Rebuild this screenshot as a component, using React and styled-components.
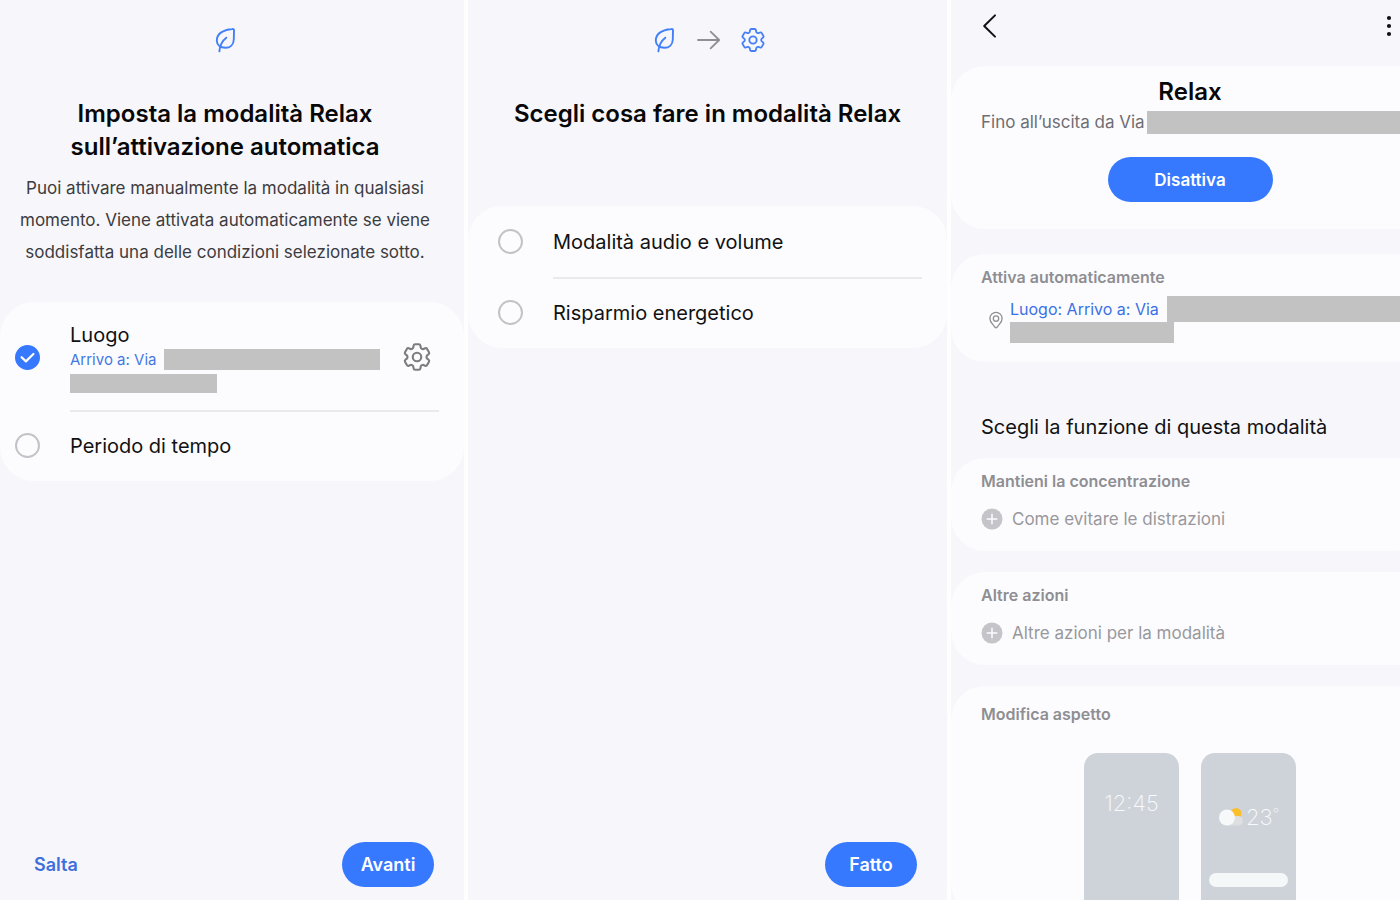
import React from "react";
import styled, { createGlobalStyle } from "styled-components";
import { HiOutlineCog6Tooth } from "react-icons/hi2";

function Leaf() {
  return (
    <svg width="26" height="26" viewBox="0 0 26 26" fill="none" stroke="#437ff7" strokeWidth="1.9" strokeLinecap="round" strokeLinejoin="round" aria-hidden="true">
      <path d="M20.3 2C21.6 1.8 22 2.3 22 3.3L21.8 12.5C21.6 17.5 18.3 20.8 13.5 20.8C8.3 20.8 4.8 18 4.8 13.6C4.8 7.2 10 3.2 20.3 2Z" />
      <path d="M7.4 24.4C7.8 18.5 10 14 14.3 10.7" />
    </svg>
  );
}

function Arrow() {
  return (
    <svg width="24" height="20" viewBox="0 0 24 20" fill="none" stroke="#8f8f94" strokeWidth="1.8" strokeLinecap="round" strokeLinejoin="round" aria-hidden="true">
      <path d="M1 10H22M13.6 1.6L22.2 10L13.6 18.4" />
    </svg>
  );
}

function Pin() {
  return (
    <svg width="16" height="18" viewBox="0 0 16 18" fill="none" stroke="#8f8f94" strokeWidth="1.3" strokeLinejoin="round" aria-hidden="true">
      <path d="M8 16.8C6.8 16.8 6.4 15.4 5 13.7C3.4 11.8 1.9 10.2 1.9 7.4A6.1 6.1 0 0 1 14.1 7.4C14.1 10.2 12.6 11.8 11 13.7C9.6 15.4 9.2 16.8 8 16.8Z" />
      <circle cx="8" cy="7.6" r="2.7" />
    </svg>
  );
}

function Plus() {
  return (
    <svg width="22" height="22" viewBox="0 0 22 22" aria-hidden="true">
      <circle cx="11" cy="11" r="10.5" fill="#c5c5c9" />
      <path d="M11 6.2V15.8M6.2 11H15.8" stroke="#fcfcff" strokeWidth="1.5" strokeLinecap="round" />
    </svg>
  );
}

function Weather() {
  return (
    <svg width="26" height="20" viewBox="0 0 26 20" aria-hidden="true">
      <circle cx="18" cy="6.5" r="5.5" fill="#fbbf2d" />
      <path d="M8 18.5A8 8 0 0 0 15 9H21A4.8 4.8 0 0 1 20 18.5Z" fill="#dedfe0" />
      <circle cx="9" cy="10.5" r="8" fill="#f6f8fa" />
    </svg>
  );
}

function Option({ label, checked, children, action }) {
  return (
    <Row>
      <RowLabel>
        <Check>
          <CheckInput type="checkbox" defaultChecked={checked} />
          <svg width="25" height="25" viewBox="0 0 25 25" fill="none" stroke="#fff" strokeWidth="2.2" strokeLinecap="round" strokeLinejoin="round" aria-hidden="true">
            <path d="M6.6 12.2L10.9 16.4L18.4 9" />
          </svg>
        </Check>
        <RowText>
          {label}
          {children}
        </RowText>
      </RowLabel>
      {action}
    </Row>
  );
}

function App() {
  return (
    <>
      <GlobalStyle />
      <Screens>
        <Panel>
          <Intro $shift>
            <Icons>
              <Leaf />
            </Icons>
            <Title>
              Imposta la modalità Relax
              <br />
              sull’attivazione automatica
            </Title>
            <Para>
              Puoi attivare manualmente la modalità in qualsiasi
              <br />
              momento. Viene attivata automaticamente se viene
              <br />
              soddisfatta una delle condizioni selezionate sotto.
            </Para>
          </Intro>
          <Options $inset={15}>
            <Option
              label="Luogo"
              checked
              action={
                <IconButton aria-label="Impostazioni luogo">
                  <HiOutlineCog6Tooth size={34} />
                </IconButton>
              }
            >
              <Place>
                Arrivo a: Via
                <Redacted $w={216} $h={21} />
              </Place>
              <Redacted $w={147} $h={19} />
            </Option>
            <Option label="Periodo di tempo" />
          </Options>
          <Footer>
            <TextButton>Salta</TextButton>
            <PillButton>Avanti</PillButton>
          </Footer>
        </Panel>

        <Panel>
          <Intro>
            <Icons>
              <Leaf />
              <Arrow />
              <HiOutlineCog6Tooth size={24} viewBox="2.2 2.2 19.6 19.6" color="#437ff7" />
            </Icons>
            <Title>Scegli cosa fare in modalità Relax</Title>
          </Intro>
          <Options $inset={30}>
            <Option label="Modalità audio e volume" />
            <Option label="Risparmio energetico" />
          </Options>
          <Footer>
            <PillButton>Fatto</PillButton>
          </Footer>
        </Panel>

        <Panel>
          <TopBar>
            <IconButton aria-label="Indietro">
              <svg width="16" height="26" viewBox="0 0 16 26" fill="none" stroke="#111" strokeWidth="2" strokeLinecap="round" strokeLinejoin="round">
                <path d="M14 2.4L3.2 13L14 23.6" />
              </svg>
            </IconButton>
            <IconButton aria-label="Altre opzioni">
              <svg width="6" height="22" viewBox="0 0 6 22" fill="#111">
                <circle cx="3" cy="3" r="2.1" />
                <circle cx="3" cy="11" r="2.1" />
                <circle cx="3" cy="19" r="2.1" />
              </svg>
            </IconButton>
          </TopBar>
          <Hero>
            <HeroTitle>Relax</HeroTitle>
            <Until>
              Fino all’uscita da Via
              <Redacted $w={253} $h={23} />
            </Until>
            <PillButton $wide>Disattiva</PillButton>
          </Hero>
          <AutoCard>
            <CardTitle>Attiva automaticamente</CardTitle>
            <Location>
              <Pin />
              <div>
                <LocationLink href="#luogo">
                  Luogo: Arrivo a: Via
                  <Redacted $w={260} $h={26} />
                </LocationLink>
                <Redacted $w={164} $h={21} />
              </div>
            </Location>
          </AutoCard>
          <SectionTitle>Scegli la funzione di questa modalità</SectionTitle>
          <Card>
            <CardTitle>Mantieni la concentrazione</CardTitle>
            <AddButton>
              <Plus />
              Come evitare le distrazioni
            </AddButton>
          </Card>
          <Card>
            <CardTitle>Altre azioni</CardTitle>
            <AddButton>
              <Plus />
              Altre azioni per la modalità
            </AddButton>
          </Card>
          <LookCard>
            <CardTitle>Modifica aspetto</CardTitle>
            <Previews>
              <Phone>
                <Clock>12:45</Clock>
              </Phone>
              <Phone>
                <Forecast>
                  <Weather />
                  <span>
                    23<Degree>°</Degree>
                  </span>
                </Forecast>
                <SearchBar />
              </Phone>
            </Previews>
          </LookCard>
        </Panel>
      </Screens>
    </>
  );
}

const GlobalStyle = createGlobalStyle`
  * {
    box-sizing: border-box;
  }
  body {
    margin: 0;
    background: #fefefe;
    font-family: Inter, "Liberation Sans", sans-serif;
    color: #111;
  }
  button {
    font-family: inherit;
    border: none;
    padding: 0;
    background: none;
    cursor: pointer;
  }
  h1, h2, h3, p {
    margin: 0;
  }
  svg {
    display: block;
    flex-shrink: 0;
  }
`;

const Screens = styled.main`
  display: grid;
  grid-template-columns: 464fr 479fr 449fr;
  gap: 4px;
  height: 100vh;
`;

const Panel = styled.section`
  display: flex;
  flex-direction: column;
  min-width: 0;
  overflow: hidden;
  background: #f6f6fb;
`;

const Intro = styled.header`
  min-height: 206px;
  padding-right: ${(props) => (props.$shift ? "14px" : "0")};
  padding-bottom: ${(props) => (props.$shift ? "34px" : "0")};
  text-align: center;
`;

const Icons = styled.div`
  display: flex;
  align-items: center;
  justify-content: center;
  gap: 20px;
  height: 80px;
`;

const Title = styled.h1`
  margin-top: 17px;
  font-size: 24px;
  font-weight: 600;
  line-height: 33px;
  color: #080808;
`;

const Para = styled.p`
  margin-top: 9px;
  font-size: 17px;
  line-height: 32px;
  white-space: nowrap;
  color: #3c3c40;
`;

const Row = styled.div`
  display: flex;
  align-items: center;
  flex: 1;
`;

const RowLabel = styled.label`
  display: flex;
  align-items: center;
  flex: 1;
  gap: 30px;
  cursor: pointer;
`;

const RowText = styled.span`
  flex: 1;
  font-size: 20px;
  line-height: 28px;
`;

const Options = styled.div`
  border-radius: 34px;
  background: #fcfcff;
  padding: 0 25px 0 ${(props) => props.$inset}px;

  ${Row} {
    position: relative;
    min-height: 71px;
  }
  ${Row} + ${Row}::before {
    content: "";
    position: absolute;
    top: 0;
    right: 0;
    left: 55px;
    height: 2px;
    background: #e9e9ee;
  }
  ${Row}:first-child:has(button) {
    padding: 19px 5px 17px 0;
  }
`;

const Check = styled.span`
  display: grid;

  > * {
    grid-area: 1 / 1;
  }
`;

const CheckInput = styled.input`
  appearance: none;
  width: 25px;
  height: 25px;
  margin: 0;
  border: 2px solid #c2c2c8;
  border-radius: 50%;
  cursor: pointer;

  &:checked {
    border-color: #3679ff;
    background: #3679ff;
  }
  &:not(:checked) + svg {
    visibility: hidden;
  }
`;

const Redacted = styled.span`
  display: block;
  flex-shrink: 0;
  width: ${(props) => props.$w}px;
  height: ${(props) => props.$h}px;
  background: #c2c2c2;
`;

const Place = styled.span`
  display: flex;
  align-items: center;
  gap: 8px;
  margin-bottom: 4px;
  font-size: 15px;
  line-height: 21px;
  white-space: nowrap;
  color: #4478e3;
`;

const IconButton = styled.button`
  display: flex;
  color: #7d7d80;
`;

const Footer = styled.footer`
  display: flex;
  align-items: center;
  margin-top: auto;
  padding: 0 30px 13px 34px;
`;

const TextButton = styled.button`
  font-size: 18px;
  font-weight: 600;
  line-height: 24px;
  color: #3f6fdc;
`;

const PillButton = styled.button`
  min-width: ${(props) => (props.$wide ? "165px" : "92px")};
  height: 45px;
  margin-left: auto;
  border-radius: 23px;
  background: #3679ff;
  color: #fff;
  font-size: ${(props) => (props.$wide ? "17px" : "18px")};
  font-weight: 600;
`;

const TopBar = styled.div`
  display: flex;
  align-items: center;
  justify-content: space-between;
  height: 52px;
  margin-bottom: 14px;
  padding: 0 8px 0 30px;
  flex-shrink: 0;
`;

/* the cards run past the right edge of the screen */
const Card = styled.section`
  flex-shrink: 0;
  margin: 0 -29px 21px 0;
  padding: 12px 30px 20px;
  border-radius: 34px;
  background: #fcfcff;
`;

const Hero = styled(Card)`
  display: flex;
  flex-direction: column;
  align-items: center;
  margin-bottom: 25px;
  padding: 10px 30px 27px;

  ${PillButton} {
    margin: 23px 0 0;
  }
`;

const HeroTitle = styled.h2`
  font-size: 24px;
  font-weight: 600;
  line-height: 32px;
  color: #080808;
`;

const Until = styled.p`
  display: flex;
  align-items: center;
  gap: 2px;
  align-self: flex-start;
  margin-top: 3px;
  font-size: 17px;
  line-height: 23px;
  white-space: nowrap;
  color: #6e6e73;
`;

const CardTitle = styled.h3`
  font-size: 16px;
  font-weight: 600;
  line-height: 22px;
  color: #8e8e93;
`;

const AutoCard = styled(Card)`
  margin-bottom: 50px;
  padding-bottom: 19px;
`;

const Location = styled.div`
  display: flex;
  align-items: center;
  gap: 6px;
  margin-top: 8px;
  padding-left: 7px;
`;

const LocationLink = styled.a`
  display: flex;
  align-items: center;
  gap: 8px;
  font-size: 16px;
  line-height: 26px;
  white-space: nowrap;
  text-decoration: none;
  color: #3a70e6;
`;

const SectionTitle = styled.h2`
  padding-left: 30px;
  margin-bottom: 16px;
  font-size: 20px;
  font-weight: 400;
  line-height: 30px;
`;

const AddButton = styled.button`
  display: flex;
  align-items: center;
  gap: 9px;
  margin-top: 15px;
  font-size: 17px;
  line-height: 24px;
  color: #98989c;
`;

const LookCard = styled(Card)`
  padding: 17px 30px 0;
`;

const Previews = styled.div`
  display: flex;
  justify-content: center;
  gap: 22px;
  margin-top: 28px;
`;

const Phone = styled.div`
  display: flex;
  flex-direction: column;
  align-items: center;
  width: 95px;
  height: 164px;
  padding: 0 8px;
  border-radius: 14px 14px 0 0;
  background: #ced3da;
  color: #f8fafc;
`;

const Clock = styled.span`
  margin-top: 36px;
  font-size: 22px;
  font-weight: 200;
  line-height: 28px;
`;

const Forecast = styled.span`
  display: flex;
  align-items: center;
  gap: 2px;
  margin-top: 50px;
  font-size: 22px;
  font-weight: 200;
  line-height: 28px;
`;

const Degree = styled.span`
  font-size: 14px;
  line-height: 14px;
  vertical-align: 6px;
`;

const SearchBar = styled.span`
  align-self: stretch;
  height: 14px;
  margin-top: 42px;
  border-radius: 7px;
  background: #f5f8f9;
`;

export default App;
